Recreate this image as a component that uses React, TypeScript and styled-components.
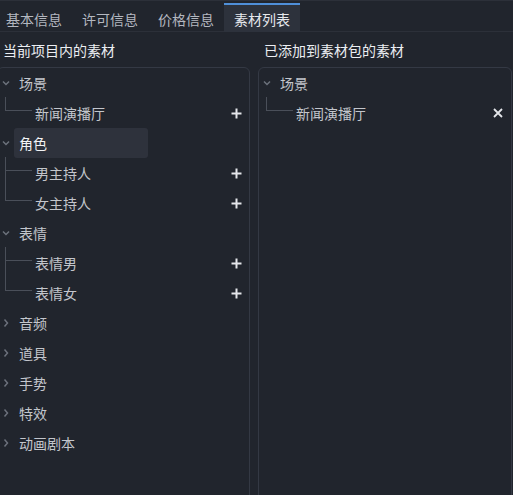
import React from "react";
import styled, { createGlobalStyle } from "styled-components";

const Global = createGlobalStyle`
  html, body { margin: 0; padding: 0; background: #21252d; overflow: hidden; }
  body { font-family: "Noto Sans CJK SC", "Noto Sans", sans-serif; font-size: 14px; }
  * { box-sizing: border-box; }
`;

const Page = styled.div`
  width: 513px;
  height: 495px;
  background: #21252d;
  display: flex;
  flex-direction: column;
  overflow: hidden;
`;

const TabBar = styled.div`
  display: flex;
  height: 32px;
  padding-top: 2px;
  border-top: 1px solid #2c3039;
  border-bottom: 1px solid #2c3039;
  background: #21252d;
`;

const Tab = styled.div<{ $active?: boolean }>`
  height: 29px;
  padding: 0 10px;
  display: flex;
  align-items: center;
  color: ${(p) => (p.$active ? "#e6e8ec" : "#b4b8c0")};
  background: ${(p) => (p.$active ? "#2d323c" : "transparent")};
  border-top: 2px solid ${(p) => (p.$active ? "#4f8fd8" : "transparent")};
  line-height: 1;
  &:first-child { padding-left: 6px; }
`;

const Columns = styled.div`
  display: grid;
  grid-template-columns: 253px 254px;
  column-gap: 8px;
  padding-top: 8px;
  margin-left: -3px;
`;

const Column = styled.div`
  display: flex;
  flex-direction: column;
`;

const Title = styled.div`
  height: 20px;
  line-height: 20px;
  padding-left: 6px;
  color: #eceef2;
  margin-bottom: 7px;
`;

const Box = styled.div`
  height: 440px;
  border: 1px solid #343944;
  border-radius: 6px;
`;

const Row = styled.div`
  height: 30px;
  display: flex;
  align-items: center;
  position: relative;
  padding-right: 6px;
`;

const Chevron = styled.span`
  width: 21px;
  display: flex;
  align-items: center;
  padding-left: 4px;
  color: #6c717c;
`;

const Label = styled.span`
  flex: 1;
  display: flex;
  align-items: center;
  height: 30px;
  color: #c3c6cc;
`;

const Highlight = styled.span`
  width: 134px;
  margin-left: -5px;
  padding-left: 5px;
  height: 30px;
  display: flex;
  align-items: center;
  border-radius: 3px;
  background: #2e323c;
  color: #f2f3f5;
`;

const ChildLabel = styled.span`
  flex: 1;
  padding-left: 37px;
  color: #c3c6cc;
`;

const Connector = styled.span<{ $last?: boolean }>`
  position: absolute;
  left: 7px;
  top: -1px;
  width: 26px;
  height: ${(p) => (p.$last ? "14px" : "31px")};
  border-left: 1px solid #4a4f59;
  &::after {
    content: "";
    position: absolute;
    left: 0;
    top: 13px;
    width: 26px;
    border-top: 1px solid #4a4f59;
  }
`;

const Action = styled.span`
  width: 14px;
  display: flex;
  justify-content: center;
  color: #e4e6ea;
`;

const Down = () => (
  <svg width="8" height="6" viewBox="0 0 8 6">
    <path d="M1 1.5 L4 4.5 L7 1.5" fill="none" stroke="currentColor" strokeWidth="1.5" />
  </svg>
);
const Right = () => (
  <svg width="8" height="10" viewBox="0 0 8 10">
    <path d="M2.5 1.5 L5.5 5 L2.5 8.5" fill="none" stroke="currentColor" strokeWidth="1.5" />
  </svg>
);
const Plus = () => (
  <svg width="11" height="11" viewBox="0 0 11 11">
    <path d="M5.5 0.5 V10.5 M0.5 5.5 H10.5" stroke="currentColor" strokeWidth="2" />
  </svg>
);
const Cross = () => (
  <svg width="10" height="10" viewBox="0 0 10 10">
    <path d="M1 1 L9 9 M9 1 L1 9" stroke="currentColor" strokeWidth="1.8" />
  </svg>
);

type Group = { name: string; open: boolean; active?: boolean; children: string[] };

const left: Group[] = [
  { name: "场景", open: true, children: ["新闻演播厅"] },
  { name: "角色", open: true, active: true, children: ["男主持人", "女主持人"] },
  { name: "表情", open: true, children: ["表情男", "表情女"] },
  { name: "音频", open: false, children: [] },
  { name: "道具", open: false, children: [] },
  { name: "手势", open: false, children: [] },
  { name: "特效", open: false, children: [] },
  { name: "动画剧本", open: false, children: [] },
];

const right: Group[] = [{ name: "场景", open: true, children: ["新闻演播厅"] }];

const Tree = ({ groups, icon }: { groups: Group[]; icon: React.ReactNode }) => (
  <>
    {groups.map((g) => (
      <React.Fragment key={g.name}>
        <Row>
          <Chevron>{g.open ? <Down /> : <Right />}</Chevron>
          {g.active ? <Highlight>{g.name}</Highlight> : <Label>{g.name}</Label>}
        </Row>
        {g.children.map((c, i) => (
          <Row key={c}>
            <Connector $last={i === g.children.length - 1} />
            <ChildLabel>{c}</ChildLabel>
            <Action>{icon}</Action>
          </Row>
        ))}
      </React.Fragment>
    ))}
  </>
);

export default function App() {
  return (
    <Page>
      <Global />
      <TabBar>
        <Tab>基本信息</Tab>
        <Tab>许可信息</Tab>
        <Tab>价格信息</Tab>
        <Tab $active>素材列表</Tab>
      </TabBar>
      <Columns>
        <Column>
          <Title>当前项目内的素材</Title>
          <Box>
            <Tree groups={left} icon={<Plus />} />
          </Box>
        </Column>
        <Column>
          <Title>已添加到素材包的素材</Title>
          <Box>
            <Tree groups={right} icon={<Cross />} />
          </Box>
        </Column>
      </Columns>
    </Page>
  );
}
